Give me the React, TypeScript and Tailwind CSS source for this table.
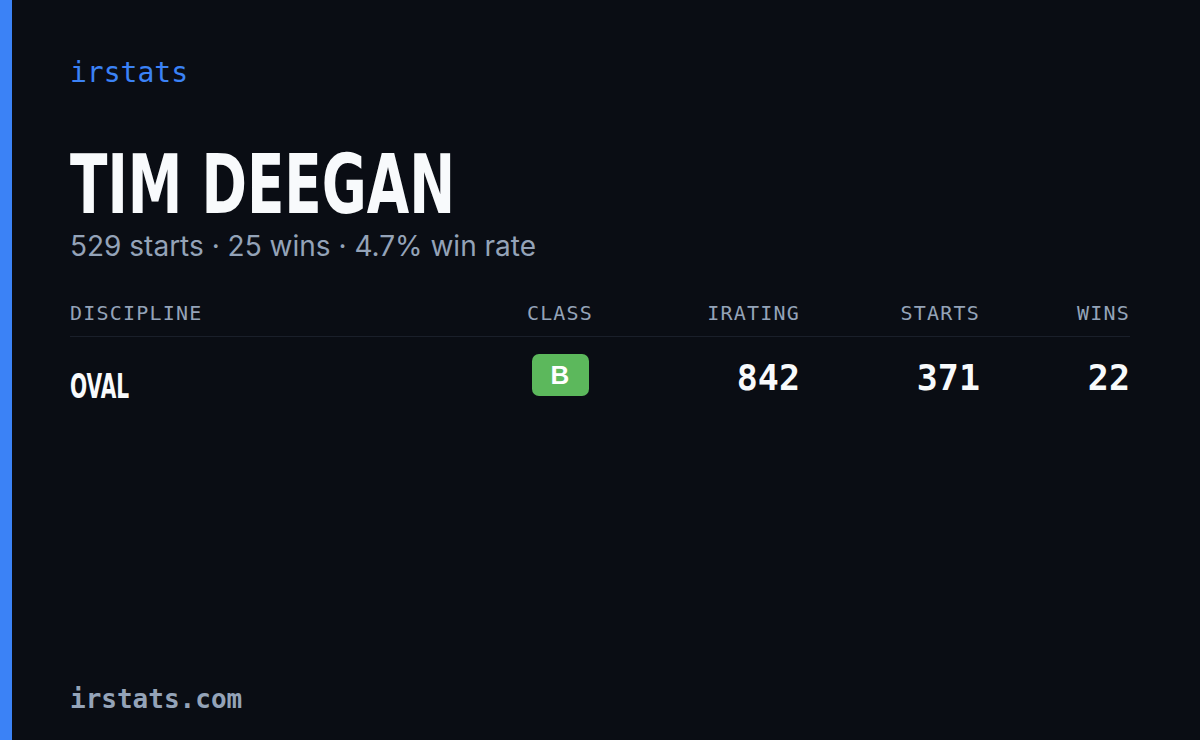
import React from 'react';

const mono = "font-['DejaVu_Sans_Mono',monospace]";
const condensed = "font-['DejaVu_Sans_Condensed','DejaVu_Sans',sans-serif]";

const rows = [
  { discipline: 'OVAL', cls: 'B', irating: 842, starts: 371, wins: 22 },
];

const App: React.FC = () => {
  return (
    <div className="flex h-[740px] w-full bg-[#0a0d14]">
      {/* accent bar */}
      <div className="w-3 shrink-0 bg-[#3b82f6]" />

      <div className="flex flex-1 flex-col pl-[58px] pr-[70px] pt-[59px] pb-[28px]">
        <div className={`${mono} text-[28px] leading-none text-[#3b82f6]`}>irstats</div>

        <h1 className={`${condensed} mt-[57px] origin-left scale-x-[0.743] text-[82px] font-bold leading-none whitespace-nowrap text-[#f8fafc]`}>
          TIM DEEGAN
        </h1>
        <p className="mt-[6px] font-['Inter',sans-serif] text-[28px] leading-none text-[#94a3b8]">
          529 starts · 25 wins · 4.7% win rate
        </p>

        {/* discipline table */}
        <div className="mt-[43px]">
          <div className={`${mono} grid grid-cols-[1fr_80px_200px_180px_150px] border-b border-[#1a1f2a] pb-[13px] text-[20px] leading-none tracking-[0.06em] text-[#94a3b8]`}>
            <div>DISCIPLINE</div>
            <div className="text-center">CLASS</div>
            <div className="text-right">IRATING</div>
            <div className="text-right">STARTS</div>
            <div className="text-right">WINS</div>
          </div>
          {rows.map((r) => (
            <div key={r.discipline} className="grid grid-cols-[1fr_80px_200px_180px_150px] items-start">
              <div className="pt-[33px]">
                <span className={`${condensed} inline-block origin-left scale-x-[0.68] text-[33px] font-bold leading-none text-[#f8fafc]`}>
                  {r.discipline}
                </span>
              </div>
              <div className="flex justify-center pt-[17px]">
                <span className="flex h-[42px] w-[57px] items-center justify-center rounded-[7px] bg-[#5cb85c] font-['Liberation_Sans',sans-serif] text-[26px] font-bold text-white">
                  {r.cls}
                </span>
              </div>
              <div className={`${mono} pt-[24px] text-right text-[35px] font-semibold leading-none text-[#f8fafc]`}>{r.irating}</div>
              <div className={`${mono} pt-[24px] text-right text-[35px] font-semibold leading-none text-[#f8fafc]`}>{r.starts}</div>
              <div className={`${mono} pt-[24px] text-right text-[35px] font-semibold leading-none text-[#f8fafc]`}>{r.wins}</div>
            </div>
          ))}
        </div>

        <div className={`${mono} mt-auto text-[26px] leading-none font-semibold text-[#94a3b8]`}>irstats.com</div>
      </div>
    </div>
  );
};

export default App;
